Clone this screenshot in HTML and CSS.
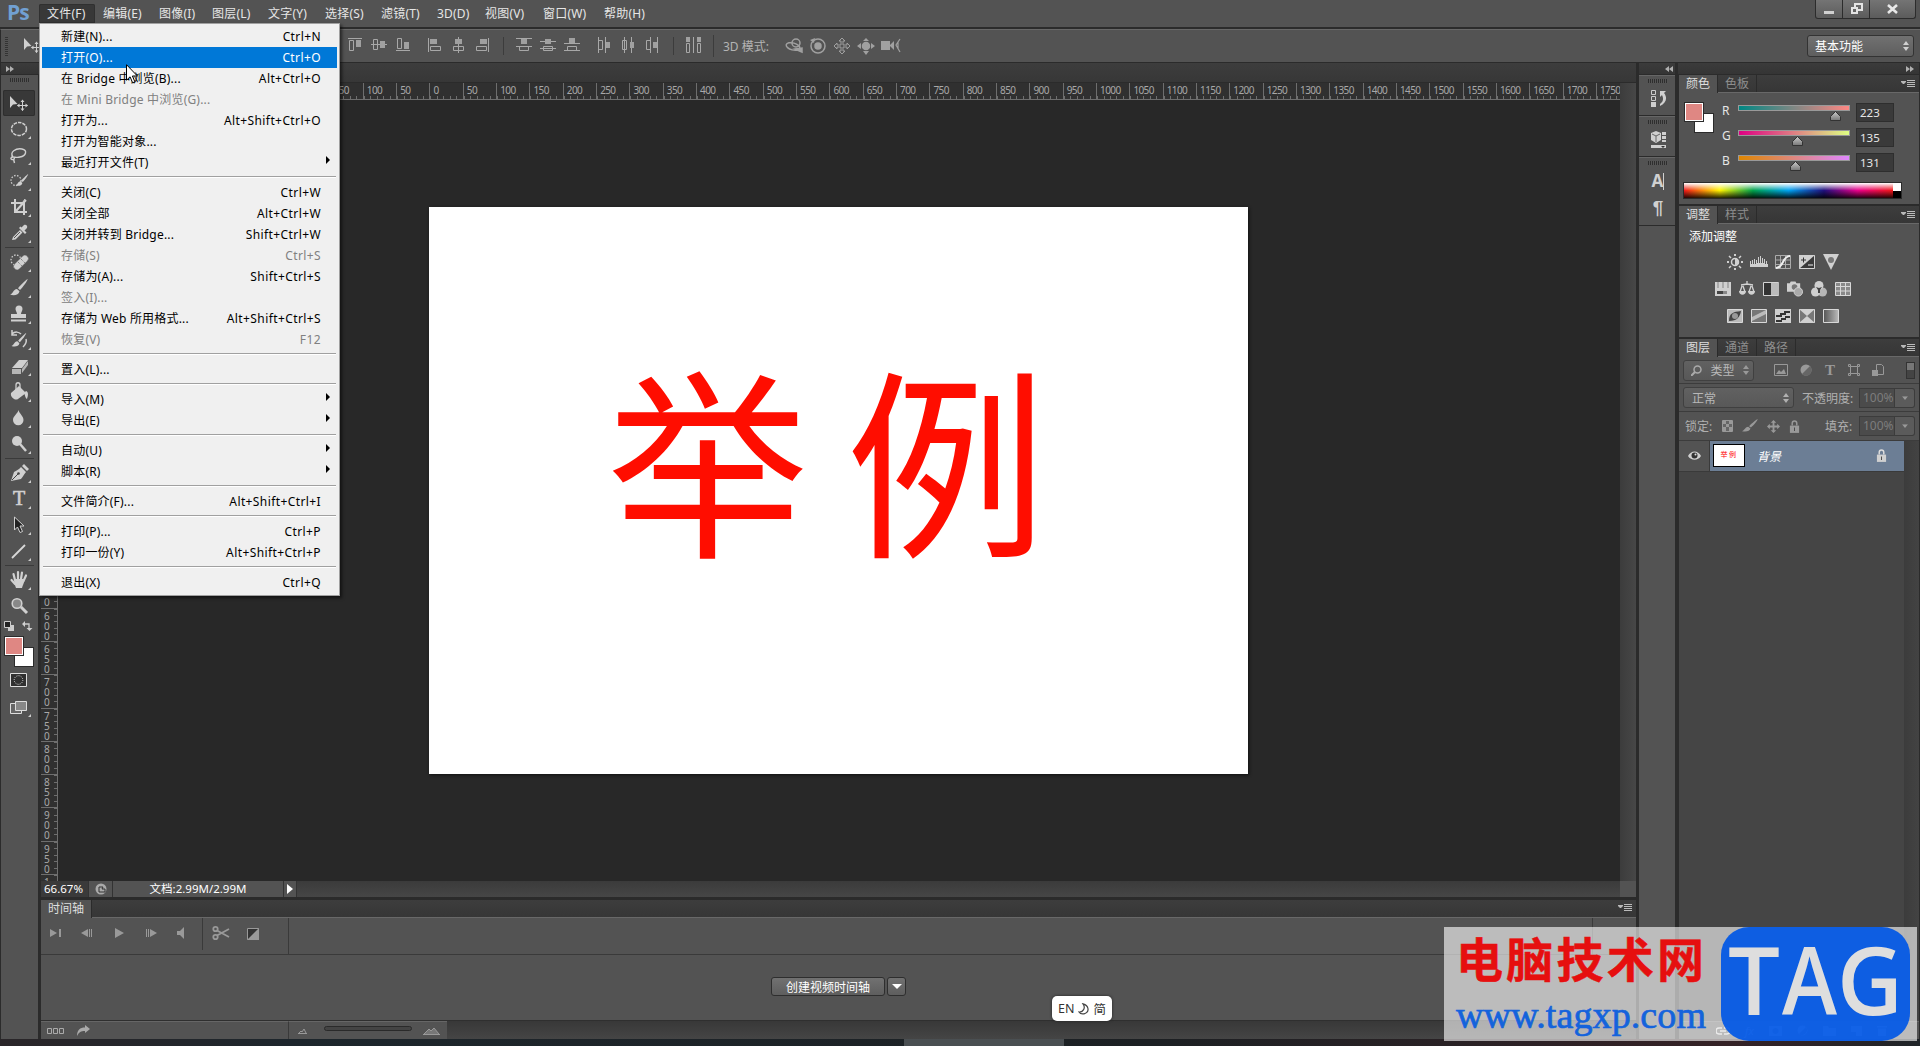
FILE: index.html
```html
<!DOCTYPE html>
<html lang="zh-CN">
<head>
    <meta charset="UTF-8">
    <title>Ps</title>
    <link rel="stylesheet" href="styles.css">
    <script src="rulers.js" defer></script>
</head>
<body>
    <!-- shared icons -->
    <svg class="defs" width="0" height="0">
        <symbol id="panel-menu" viewBox="0 0 14 9"><path d="M0 2h5v1L3 5H2L0 3z" fill="#b8b8b8"/><path d="M6 1.500h8M6 3.500h8M6 5.500h8M6 7.500h8" stroke="#bbb" stroke-width="1"/></symbol>
        <symbol id="updown" viewBox="0 0 6 10"><path d="M3 0l3 4H0zM3 10l3-4H0z"/></symbol>
        <symbol id="down" viewBox="0 0 8 5"><path d="M0 0h8L4 5z"/></symbol>
        <symbol id="move" viewBox="0 0 18 16"><path d="M0 1v12l3-3.500L7.500 9z"/><path d="M12.500 5.500v10M7.500 10.500h10" stroke="#d0d0d0"/><path d="M12.500 4.500l2 2.500h-4zM12.500 16l2-2.500h-4zM7 10.500l2.500-2v4zM18 10.500l-2.500-2v4z"/></symbol>
        <symbol id="cross" viewBox="0 0 14 14"><path d="M7 0l3 3H8v3h3V4l3 3-3 3V8H8v3h2l-3 3-3-3h2V8H3v2L0 7l3-3v2h3V3H4z"/></symbol>
        <symbol id="brush" viewBox="0 0 18 18"><path d="M17.500 0c.7.600-4 7.600-7.500 11L8 9.200C11 5.600 17 0 17.500 0zM7 10l2.500 2.300C9 16 4 17 0 15.600 3 15 3 10.500 7 10z"/></symbol>
        <symbol id="lock" viewBox="0 0 12 14"><path d="M1 6h10v8H1z"/><path d="M3.500 6V3.500a2.500 2.500 0 0 1 5 0V6" fill="none" stroke="currentColor" stroke-width="1.600"/><path d="M5.500 8h1v4h-1z" fill="#444"/></symbol>
        <linearGradient id="tg" x2="0" y2="1"><stop offset="0" stop-color="#ccc"/><stop offset="1" stop-color="#777"/></linearGradient>
        <symbol id="thumb" viewBox="0 0 11 10"><path d="M5.500.5l5 5V9.500H.5v-4z" fill="url(#tg)" stroke="#333"/></symbol>
    </svg>

    <div class="app">
        <div class="menubar">
            <div class="logo">Ps</div>
            <div class="menus">
                <span class="menu-title active">文件(F)</span>
                <span class="menu-title">编辑(E)</span>
                <span class="menu-title">图像(I)</span>
                <span class="menu-title">图层(L)</span>
                <span class="menu-title">文字(Y)</span>
                <span class="menu-title">选择(S)</span>
                <span class="menu-title">滤镜(T)</span>
                <span class="menu-title">3D(D)</span>
                <span class="menu-title">视图(V)</span>
                <span class="menu-title">窗口(W)</span>
                <span class="menu-title">帮助(H)</span>
            </div>
            <div class="window-buttons">
                <button><svg width="10" height="12"><path d="M0 8h10v3H0z"/></svg></button>
                <button><svg width="13" height="12"><path d="M5 5V1h7v6H8" fill="none" stroke="#e4e4e4" stroke-width="2"/><path d="M2 5h5v5H2z" fill="none" stroke="#e4e4e4" stroke-width="2"/></svg></button>
                <button class="close"><svg width="11" height="10"><path d="M1 1l9 8M10 1l-9 8" stroke="#e8e8e8" stroke-width="2.600"/></svg></button>
            </div>
        </div>

        <div class="options-bar">
            <div class="grip-v"></div>
            <svg class="current-tool" width="18" height="16"><use href="#move"/></svg>
            <svg class="align-icons" width="360" height="18" viewBox="345 0 360 18">
                <g fill="none" stroke="#a8a8a8">
                    <path d="M348 1.500h14M349.500 3.500h4v10h-4zM371 7.500h16M373.500 2.500h4v10h-4zM396 13.500h14M397.500 1.500h4v10h-4z"/>
                    <path d="M428.500 1v14M430.500 9.500h10v4h-10zM458.500 0v16M453.500 9.500h10v4h-10zM488.500 1v14M476.500 9.500h10v4h-10z"/>
                    <path d="M516 1.500h16M516 9.500h16M519.500 9.500h9v4h-9zM540 4.500h16M540 11.500h16M543.500 9.500h9v4h-9zM564 6.500h16M564 13.500h16M567.500 9.500h9v4h-9z"/>
                    <path d="M598.500 0v16M605.500 0v16M598.500 3.500h4v9h-4zM624.500 0v16M631.500 0v16M622.500 3.500h4v9h-4zM650.500 0v16M657.500 0v16M646.500 3.500h4v9h-4z"/>
                    <path d="M686.500 6.500h3v9h-3zM697.500 6.500h3v9h-3zM693.500 0v16"/>
                </g>
                <g fill="#a0a0a0">
                    <path d="M356 3h5v7h-5zM380 4h5v7h-5zM404 5h5v7h-5zM430 2h7v5h-7zM455 2h7v5h-7zM480 2h7v5h-7zM521 2h6v5h-6zM545 2h6v5h-6zM569 1h6v5h-6zM606 5h4v6h-4zM630 5h4v6h-4zM653 5h4v6h-4zM686 0h4v5h-4zM697 0h4v5h-4z"/>
                </g>
                <path d="M503.500-2v20M673.500-2v20" stroke="#3c3c3c"/>
            </svg>
            <div class="divider"></div>
            <span class="mode-label">3D 模式:</span>
            <svg class="mode-icons" width="116" height="18" fill="none" stroke="#a0a0a0" stroke-width="1.500">
                <circle cx="11" cy="6" r="4"/><ellipse cx="8" cy="9.500" rx="7" ry="3.500" transform="rotate(15 8 9.500)"/><path d="M10 12l7-1v4z" fill="#a0a0a0"/>
                <circle cx="33" cy="9" r="7"/><circle cx="33" cy="9" r="3" fill="#a0a0a0"/><path d="M25 3l5-2-1 5z" fill="#a0a0a0" stroke="none"/>
                <path d="M57 1l3 3h-2v4h4V6l3 3-3 3v-2h-4v4h2l-3 3-3-3h2v-4h-4v2l-3-3 3-3v2h4V4h-2z" stroke-width="1"/>
                <circle cx="81" cy="9" r="3.500" fill="#a0a0a0"/><path d="M81 1l3 3h-6zM81 18l3-4h-6zM72 9l4-3v6zM90 9l-4-3v6z" fill="#a0a0a0" stroke="none"/>
                <path d="M96 4h9v9h-9zM105 8l4-4v9l-4-4z" fill="#a0a0a0" stroke="none"/><path d="M115 2l-4 6 4 7M113 5v7" stroke-width="1.200"/>
            </svg>
            <div class="workspace-select"><span>基本功能</span><svg width="6" height="10"><use href="#updown"/></svg></div>
        </div>

        <div class="workspace">
            <div class="tools">
                <div class="strip-head left"><svg width="8" height="6"><path d="M0 0l4 3-4 3zM4 0l4 3-4 3z"/></svg></div>
                <div class="grip"></div>
                <div class="tool active nofly"><svg viewBox="0 0 32 26"><use href="#move" x="7" y="5" width="18" height="16"/></svg></div>
                <div class="tool"><svg viewBox="0 0 32 26"><ellipse cx="16" cy="13" rx="7.500" ry="6.500" fill="none" stroke="#d0d0d0" stroke-width="1.500" stroke-dasharray="3.500 1"/></svg></div>
                <div class="tool"><svg viewBox="0 0 32 26"><path d="M10 15c-4-5 3-9 9-8 6 1 4 7-2 8-3 1-5 0-7 0zm0 0c-2 0-3 2-1 2.500s3-1 2-2.500M10.500 17l1 4" fill="none" stroke="#d0d0d0" stroke-width="1.400"/></svg></div>
                <div class="tool"><svg viewBox="0 0 32 26"><circle cx="13" cy="12.500" r="5" fill="none" stroke="#d0d0d0" stroke-width="1.300" stroke-dasharray="1.500 1.500"/><use href="#brush" x="12" y="6" width="14" height="13"/></svg></div>
                <div class="tool"><svg viewBox="0 0 32 26"><path d="M12 5v13h12M8 9h13v12M13 17l10-11" fill="none" stroke="#d0d0d0" stroke-width="2"/><path d="M22 5l-9 13" stroke="#d0d0d0"/></svg></div>
                <div class="tool"><svg viewBox="0 0 32 26"><path d="M9 20l1-3 7-7 2.500 2.500-7 7zM16 8l6 6 1.500-1.500-2-2L24 8c1-2-1-4-3-3l-2.500 2.500-1-1z"/><path d="M11 18l6-6" stroke="#555"/></svg></div>
                <div class="tool-sep"></div>
                <div class="tool"><svg viewBox="0 0 32 26"><circle cx="13" cy="11" r="5" fill="none" stroke="#d0d0d0" stroke-width="1.300" stroke-dasharray="1.500 1.500"/><rect x="9" y="10" width="18" height="7" rx="3.500" transform="rotate(-45 18 13.500)" stroke="#555" stroke-width=".5"/><path d="M15 13l4 4M18 10l4 4" stroke="#666" stroke-dasharray="1 1.200"/></svg></div>
                <div class="tool"><svg viewBox="0 0 32 26"><use href="#brush" x="7" y="4" width="18" height="18"/></svg></div>
                <div class="tool"><svg viewBox="0 0 32 26"><path d="M14 13c0-2-1.500-3-1.500-5a3.500 3.500 0 0 1 7 0c0 2-1.500 3-1.500 5h5v4H8v-4zM8 18.500h15v2H8z"/></svg></div>
                <div class="tool"><svg viewBox="0 0 32 26"><use href="#brush" x="8" y="6" width="16" height="15"/><path d="M9 7c3-3 7-2 9 0M9 3v5h5M23 12c1 3-1 6-3 8" fill="none" stroke="#d0d0d0" stroke-width="1.500"/></svg></div>
                <div class="tool"><svg viewBox="0 0 32 26"><path d="M9 15l7-8h9l-6 8z"/><path d="M9 16h9v5H9zM19 16l6-8v4l-6 8z" opacity=".8"/></svg></div>
                <div class="tool"><svg viewBox="0 0 32 26"><path d="M8 14l8-7 7 7-8 6c-3 2-8-2-7-6zM23 12c3 1 2 5 1 8-2-1-2-5-3-6z"/><path d="M13 11V6c0-3 4-3 4 0v4" fill="none" stroke="#d0d0d0" stroke-width="1.300"/></svg></div>
                <div class="tool"><svg viewBox="0 0 32 26"><path d="M15.500 5c1 4 5 6 5 10a5 5 0 0 1-10.500 0c0-4 4.500-6 5.500-10z"/></svg></div>
                <div class="tool"><svg viewBox="0 0 32 26"><circle cx="14" cy="10" r="5"/><path d="M17 13l6 7" stroke="#d0d0d0" stroke-width="2.500"/></svg></div>
                <div class="tool-sep"></div>
                <div class="tool"><svg viewBox="0 0 32 26"><path d="M8 21l3-9c3-2 6-3 7-5l5 5c-2 2-3 5-5 7zM19 6l2-2 5 5-2 2z"/><path d="M9 20l6-6" stroke="#444"/><circle cx="15.500" cy="13.500" r="1.300" fill="#444"/></svg></div>
                <div class="tool type">T</div>
                <div class="tool"><svg viewBox="0 0 32 26"><path d="M11.500 5v13l3-3 2.500 5.500 2.500-1L17 14h4z" fill="#222" stroke="#d0d0d0"/></svg></div>
                <div class="tool"><svg viewBox="0 0 32 26"><path d="M9 20L22 7" stroke="#d8d8d8" stroke-width="1.800"/></svg></div>
                <div class="tool-sep"></div>
                <div class="tool"><svg viewBox="0 0 32 26"><g stroke="#d0d0d0" stroke-width="2.200" stroke-linecap="round"><path d="M12 13L10.500 7M15 12V5M18 12l1-6.500M20.500 14L23 8.500M12 17L8.500 13"/></g><path d="M11 12h10.500c0 4-2 6-2.500 9h-6c-1-3-2-5-2-9z"/></svg></div>
                <div class="tool nofly"><svg viewBox="0 0 32 26"><circle cx="14" cy="10.500" r="4.800" fill="#888" stroke="#d0d0d0" stroke-width="1.600"/><path d="M18 14l6 6" stroke="#d0d0d0" stroke-width="3"/></svg></div>
                <div class="swatch-tools">
                    <svg width="10" height="10"><path d="M4 4h6v6H4z" fill="#ccc"/><path d="M.5.5h6v6h-6z" fill="#222" stroke="#ccc"/></svg>
                    <svg width="11" height="10"><path d="M2 3h5v5" fill="none" stroke="#ccc" stroke-width="1.300"/><path d="M0 3l3-3v6zM7.500 10l-3-3h6z"/></svg>
                </div>
                <div class="swatches"><i class="fg"></i><i class="bg"></i></div>
                <svg class="quick-mask" width="17" height="14"><path d="M.5.5h16v13H.5z" fill="#303030" stroke="#ddd"/><circle cx="8.500" cy="7" r="4.300" fill="none" stroke="#ddd" stroke-dasharray="1 1.200"/></svg>
                <div class="tool screen-mode"><svg viewBox="0 0 32 26"><path d="M7.500 9.500h11v10h-11z" fill="#666" stroke="#ddd"/><path d="M12.500 7.500h11v9h-11z" fill="#888" stroke="#ddd"/></svg></div>
            </div>

            <div class="document">
                <div class="doc-tabs"></div>
                <div class="view">
                    <div class="ruler-h" id="rulerH"></div>
                    <div class="stage">
                        <div class="ruler-v" id="rulerV"></div>
                        <div class="canvas">
                            <div class="page">
                                <svg width="819" height="567">
                                    <text x="178" y="335" class="sample">举</text>
                                    <text x="417" y="335" class="sample">例</text>
                                </svg>
                            </div>
                        </div>
                    </div>
                    <div class="vscroll"></div>
                </div>
                <div class="status">
                    <span class="zoom">66.67%</span>
                    <span class="share"><svg width="12" height="12"><circle cx="6" cy="6" r="5.500" fill="#aaa"/><path d="M4 9V4h4l-1 2h3v3z" fill="#aaa" stroke="#333"/></svg></span>
                    <span class="docsize">文档:2.99M/2.99M</span>
                    <span class="more"><svg width="6" height="10"><path d="M0 0l6 5-6 5z"/></svg></span>
                    <span class="hscroll"></span>
                    <span class="corner"></span>
                </div>
                <div class="timeline">
                    <div class="tabs"><span class="tab active">时间轴</span><svg class="pm" width="14" height="9"><use href="#panel-menu"/></svg></div>
                    <div class="tl-controls">
                        <svg class="transport" width="202" height="34" viewBox="0 2 202 34" fill="#999">
                            <path d="M9 13l7 4-7 4zM18 13h2v8h-2zM47 13v8l-7-4zM48 13h1v8h-1zM50 13h1v8h-1zM74 12l9 5-9 5zM105 13h1v8h-1zM107 13h1v8h-1zM109 13v8l7-4zM136 15h3l4-4v12l-4-4h-3z"/>
                            <g fill="none" stroke="#999" stroke-width="1.800"><circle cx="174.500" cy="13" r="2.200"/><circle cx="174.500" cy="21" r="2.200"/><path d="M176 14.500l12 6.500M176 19.500l12-6.500"/></g>
                            <path d="M161.500 2v32" stroke="#3a3a3a"/>
                        </svg>
                        <svg class="transition" width="12" height="12"><path d="M.5.5h11v11H.5z" fill="#333" stroke="#999"/><path d="M12 0v12H0z" fill="#999"/></svg>
                        <div class="tl-split"></div>
                        <div class="tl-end"></div>
                    </div>
                    <div class="tl-body">
                        <button class="create">创建视频时间轴</button>
                        <button class="create-more"><svg width="10" height="5" viewBox="0 0 8 5" preserveAspectRatio="none"><use href="#down"/></svg></button>
                    </div>
                    <div class="tl-foot">
                        <div class="foot-left">
                            <svg width="18" height="8" fill="none" stroke="#aaa"><path d="M.5 1.500h4v5h-4zM6.500 1.500h4v5h-4zM12.500 1.500h4v5h-4z"/></svg>
                            <svg width="13" height="11"><path d="M8 0l5 4-5 4V6C4 6 2 7 0 11 0 5 3 2.500 8 2.500z" fill="#aaa"/></svg>
                        </div>
                        <div class="foot-zoom">
                            <svg width="9" height="6"><path d="M0 5.500h9M1 5l2-2 1 1 2-3 2 4" fill="none" stroke="#999"/></svg>
                            <i class="track"></i>
                            <svg width="17" height="8"><path d="M0 7.500h17M1 7l5-5 2 2 3-3 5 6" fill="#777" stroke="#999"/></svg>
                        </div>
                    </div>
                </div>
            </div>

            <div class="dock">
                <div class="strip-head right"><svg width="8" height="6"><path d="M4 0L0 3l4 3zM8 0L4 3l4 3z"/></svg></div>
                <div class="dock-group">
                    <i class="grip"></i>
                    <svg width="16" height="18"><path d="M.5.5h4v4h-4zM.5 6.500h4v4h-4z" fill="none" stroke="#ccc"/><path d="M0 12h5v5H0z"/><path d="M9 1h6l-2 2c4 5 2 10-4 13v-2c3-2 4-5 2-9l-2 2z"/></svg>
                </div>
                <div class="dock-group">
                    <i class="grip"></i>
                    <svg width="16" height="18"><path d="M5 0l5 2v7l-5 3-5-3V2z"/><path d="M1 3l4 2 4-2M5 5v6" stroke="#666" fill="none"/><path d="M11 1h4v3h-4zM11 5h4v3h-4zM11 9h4v2h-4zM0 14h15v3H0z"/><path d="M10 15h4l-2 2z" fill="#333"/></svg>
                </div>
                <div class="dock-group tall">
                    <i class="grip"></i>
                    <span class="dock-char">A<i></i></span>
                    <span class="dock-para">¶</span>
                </div>
            </div>

            <div class="panels">
                <div class="strip-head end"><svg width="8" height="6"><path d="M0 0l4 3-4 3zM4 0l4 3-4 3z"/></svg></div>

                <div class="panel color-panel">
                    <div class="tabs"><span class="tab active">颜色</span><span class="tab">色板</span><svg class="pm" width="14" height="9"><use href="#panel-menu"/></svg></div>
                    <div class="color-body">
                        <div class="swatches"><i class="fg"></i><i class="bg"></i></div>
                        <div class="sliders">
                            <div class="slider"><b>R</b><div class="bar r"><svg style="margin-left:91px" width="11" height="10"><use href="#thumb"/></svg></div><span class="num">223</span></div>
                            <div class="slider"><b>G</b><div class="bar g"><svg style="margin-left:53px" width="11" height="10"><use href="#thumb"/></svg></div><span class="num">135</span></div>
                            <div class="slider"><b>B</b><div class="bar b"><svg style="margin-left:51px" width="11" height="10"><use href="#thumb"/></svg></div><span class="num">131</span></div>
                        </div>
                    </div>
                    <div class="spectrum"><div class="hues"></div><div class="bw"></div></div>
                </div>

                <div class="panel adjust-panel">
                    <div class="tabs"><span class="tab active">调整</span><span class="tab">样式</span><svg class="pm" width="14" height="9"><use href="#panel-menu"/></svg></div>
                    <div class="adjust-title">添加调整</div>
                    <div class="adjust-row">
                        <svg viewBox="0 0 16 16"><circle cx="8" cy="8" r="3.500" fill="none" stroke="#d4d4d4" stroke-width="1.500"/><path d="M8 4.500v7a3.500 3.500 0 0 0 0-7M7 0h2v2H7zM7 14h2v2H7zM0 7h2v2H0zM14 7h2v2h-2z"/><path d="M2 2l2 2M12 12l2 2M14 2l-2 2M4 12l-2 2" stroke="#d4d4d4" stroke-width="1.500"/></svg>
                        <svg viewBox="0 0 18 16" class="w18"><path d="M0 13V7h1v3h1V6h1v4h1V5h1v5h1V6h1v3h1V3h1v6h1V2h1v7h1V4h1v5h1V5h1v5h1V7h1v3h1v3z"/></svg>
                        <svg viewBox="0 0 16 14"><path d="M.5.5h15v13H.5zM5.500 0v14M10.500 0v14M0 5h16M0 9.500h16" fill="none" stroke="#aaa"/><path d="M1 13c8 0 6-12 14-12" fill="none" stroke="#eee" stroke-width="2"/></svg>
                        <svg viewBox="0 0 16 14"><path d="M.5.5h15v13H.5z" fill="#3a3a3a" stroke="#d4d4d4"/><path d="M0 0h16L0 14z"/><path d="M2 5h5M4.500 2.500v5" stroke="#333"/><path d="M9 10h5" stroke="#eee"/></svg>
                        <svg viewBox="0 0 16 16"><path d="M0 0h16L8 16z"/><circle cx="8" cy="6" r="3" fill="#777"/></svg>
                    </div>
                    <div class="adjust-row">
                        <svg viewBox="0 0 16 14"><path d="M0 0h16v14H0z"/><path d="M2 0h2v6H2zM7 0h2v6H7zM12 0h2v6h-2z" fill="#aaa"/><path d="M2 9h6v3H2z" fill="#444"/><path d="M8 9h4v3H8z" fill="#888"/></svg>
                        <svg viewBox="0 0 16 16"><path d="M8 0v4M2 4l6-1 6 1M3 5l-2 6M4 5l2 6M12 5l-2 6M13 5l2 6" fill="none" stroke="#d4d4d4" stroke-width="1.300"/><path d="M0 10h7c0 5-7 5-7 0zM9 10h7c0 5-7 5-7 0z"/></svg>
                        <svg viewBox="0 0 16 14"><path d="M.5.5h15v13H.5z" fill="#333" stroke="#d4d4d4"/><path d="M8 1h8v12H8z" fill="#bbb"/></svg>
                        <svg viewBox="0 0 17 16"><path d="M0 2h3l1-2h5l1 2h4v9H0z"/><circle cx="8" cy="6" r="3" fill="#777"/><circle cx="12" cy="11" r="4.500" fill="#aaa" stroke="#d4d4d4"/></svg>
                        <svg viewBox="0 0 16 16"><circle cx="8" cy="4.500" r="4.500"/><circle cx="4.500" cy="11" r="4.500"/><circle cx="11.500" cy="11" r="4.500" opacity=".8"/><path d="M5 6l3 1 3-1-2 3v3H7V9z" fill="#444"/></svg>
                        <svg viewBox="0 0 16 14"><path d="M.5.5h15v13H.5zM.5 4.500h15M.5 9h15M5.500 1v12M10.500 1v12" fill="#888" stroke="#d8d8d8"/></svg>
                    </div>
                    <div class="adjust-row">
                        <svg viewBox="0 0 16 14"><path d="M.5.5h15v13H.5z" fill="#bbb" stroke="#d8d8d8"/><path d="M2 12C2 4 6 3 14 2 13 8 10 12 2 12z" fill="#444"/><circle cx="8" cy="7" r="3" fill="#999"/></svg>
                        <svg viewBox="0 0 16 14"><path d="M.5.5h15v13H.5z" fill="#777" stroke="#d8d8d8"/><path d="M1 8L15 1v4L1 12z" fill="#bbb"/></svg>
                        <svg viewBox="0 0 16 14"><path d="M0 0h16v14H0z"/><path d="M1 6h4V4h4V2h6v2h-4v2H7v2H1zM1 11h5V9h4V7h5v2h-4v2H7v2H1z" fill="#333"/></svg>
                        <svg viewBox="0 0 16 14"><path d="M.5.5h15v13H.5z" fill="#777" stroke="#d8d8d8"/><path d="M0 0h16L8 7zM0 14h16L8 7z"/></svg>
                        <svg viewBox="0 0 16 14"><defs><linearGradient id="gm"><stop stop-color="#555"/><stop offset="1" stop-color="#bbb"/></linearGradient></defs><path d="M.5.5h15v13H.5z" fill="url(#gm)" stroke="#d8d8d8"/></svg>
                    </div>
                </div>

                <div class="panel layers-panel">
                    <div class="tabs"><span class="tab active">图层</span><span class="tab">通道</span><span class="tab">路径</span><svg class="pm" width="14" height="9"><use href="#panel-menu"/></svg></div>
                    <div class="layer-filter">
                        <div class="select kind"><svg width="11" height="11"><circle cx="6.500" cy="4.500" r="3.500" fill="none" stroke="#aaa" stroke-width="1.500"/><path d="M4 7l-4 4" stroke="#aaa" stroke-width="2"/></svg><span>类型</span><svg width="6" height="10"><use href="#updown"/></svg></div>
                        <svg width="14" height="12"><path d="M.5.5h13v11H.5z" fill="none" stroke="#999"/><path d="M2 10l3-4 2 2 3-3 2 5z"/></svg>
                        <svg width="12" height="12"><circle cx="6" cy="6" r="5.500" fill="#999"/><path d="M2 10L10 2A5.500 5.500 0 0 1 2 10z" fill="#666"/></svg>
                        <span class="filter-type">T</span>
                        <svg width="12" height="12"><path d="M2.500 2.500h7v7h-7z" fill="none" stroke="#999"/><path d="M.5.5h2v2h-2zM9.500.5h2v2h-2zM.5 9.500h2v2h-2zM9.500 9.500h2v2h-2z" fill="#555" stroke="#999"/></svg>
                        <svg width="12" height="13"><path d="M4.500.5h5l2 2v8h-7z" fill="none" stroke="#999"/><path d="M0 6h6v6H0z"/></svg>
                        <i class="toggle"></i>
                    </div>
                    <div class="layer-mode">
                        <div class="select mode"><span>正常</span><svg width="6" height="10"><use href="#updown"/></svg></div>
                        <label>不透明度:</label>
                        <span class="pct">100%</span><span class="pct-btn"><svg width="6" height="4" viewBox="0 0 8 5"><use href="#down"/></svg></span>
                    </div>
                    <div class="layer-lock">
                        <label class="lock-label">锁定:</label>
                        <svg width="11" height="12"><path d="M.5.5h10v11H.5z" fill="#666" stroke="#999"/><path d="M1 1h3v3H1zM7 1h3v3H7zM4 4h3v3H4zM1 7h3v4H1zM7 7h3v4H7z"/></svg>
                        <svg width="16" height="14" viewBox="0 0 18 18" preserveAspectRatio="none"><use href="#brush"/></svg>
                        <svg width="13" height="13"><use href="#cross"/></svg>
                        <svg width="11" height="13" color="#999"><use href="#lock"/></svg>
                        <label class="fill-label">填充:</label>
                        <span class="pct">100%</span><span class="pct-btn"><svg width="6" height="4" viewBox="0 0 8 5"><use href="#down"/></svg></span>
                    </div>
                    <div class="layer-list">
                        <div class="layer">
                            <span class="eye"><svg width="13" height="10"><path d="M0 5c3-6 10-6 13 0-3 5-10 5-13 0z"/><circle cx="6.500" cy="4.500" r="3" fill="#333"/><circle cx="7.500" cy="3.500" r="1" fill="#ddd"/></svg></span>
                            <div class="layer-row">
                                <span class="thumb">举例</span>
                                <span class="layer-name">背景</span>
                                <svg width="11" height="13" color="#ddd"><use href="#lock"/></svg>
                            </div>
                        </div>
                    </div>
                    <div class="layers-foot">
                        <svg width="14" height="8"><path d="M6 1H3a3 3 0 0 0 0 6h3M8 1h3a3 3 0 0 1 0 6H8M4 4h6" fill="none" stroke="#ccc" stroke-width="1.500"/></svg>
                        <em>fx</em>
                        <svg width="13" height="10"><path d="M0 0h13v10H0z"/><circle cx="6.500" cy="5" r="3" fill="#555"/></svg>
                        <svg width="11" height="11"><circle cx="5.500" cy="5.500" r="5"/><path d="M2 9l7-7a5 5 0 0 1-7 7z" fill="#555"/></svg>
                        <svg width="13" height="10"><path d="M0 0h5l1 2h7v8H0z"/></svg>
                        <svg width="11" height="10"><path d="M0 0h11v10H5V6H0z"/></svg>
                        <svg width="10" height="11"><path d="M0 1h10v1.500H0zM1 3.500h8V11H1z"/></svg>
                    </div>
                </div>
            </div>
        </div>
        <div class="taskbar"><i></i></div>
    </div>

    <!-- open file menu -->
    <div class="file-menu">
        <div class="item"><span>新建(N)...</span><kbd>Ctrl+N</kbd></div>
        <div class="item hover"><span>打开(O)...</span><kbd>Ctrl+O</kbd></div>
        <div class="item"><span>在 Bridge 中浏览(B)...</span><kbd>Alt+Ctrl+O</kbd></div>
        <div class="item disabled"><span>在 Mini Bridge 中浏览(G)...</span></div>
        <div class="item"><span>打开为...</span><kbd>Alt+Shift+Ctrl+O</kbd></div>
        <div class="item"><span>打开为智能对象...</span></div>
        <div class="item sub"><span>最近打开文件(T)</span></div>
        <hr>
        <div class="item"><span>关闭(C)</span><kbd>Ctrl+W</kbd></div>
        <div class="item"><span>关闭全部</span><kbd>Alt+Ctrl+W</kbd></div>
        <div class="item"><span>关闭并转到 Bridge...</span><kbd>Shift+Ctrl+W</kbd></div>
        <div class="item disabled"><span>存储(S)</span><kbd>Ctrl+S</kbd></div>
        <div class="item"><span>存储为(A)...</span><kbd>Shift+Ctrl+S</kbd></div>
        <div class="item disabled"><span>签入(I)...</span></div>
        <div class="item"><span>存储为 Web 所用格式...</span><kbd>Alt+Shift+Ctrl+S</kbd></div>
        <div class="item disabled"><span>恢复(V)</span><kbd>F12</kbd></div>
        <hr>
        <div class="item"><span>置入(L)...</span></div>
        <hr>
        <div class="item sub"><span>导入(M)</span></div>
        <div class="item sub"><span>导出(E)</span></div>
        <hr>
        <div class="item sub"><span>自动(U)</span></div>
        <div class="item sub"><span>脚本(R)</span></div>
        <hr>
        <div class="item"><span>文件简介(F)...</span><kbd>Alt+Shift+Ctrl+I</kbd></div>
        <hr>
        <div class="item"><span>打印(P)...</span><kbd>Ctrl+P</kbd></div>
        <div class="item"><span>打印一份(Y)</span><kbd>Alt+Shift+Ctrl+P</kbd></div>
        <hr>
        <div class="item"><span>退出(X)</span><kbd>Ctrl+Q</kbd></div>
    </div>
    <svg class="cursor" width="13" height="20"><path d="M.5.7v15.500l3.600-3.400 2.500 6 2.300-1-2.500-5.800h5z" fill="#fff" stroke="#000"/></svg>

    <div class="ime">EN<svg width="11" height="12"><path d="M5 .8c6 1.500 7 8.500 1 10-2 .4-4-.2-5-1.800 4 .5 7-4 4-8.200z" fill="none" stroke="#444" stroke-width="1.200"/></svg>简</div>

    <div class="watermark">
        <svg width="473" height="114">
            <rect x="277" y="0" width="189" height="114" rx="28" fill="#0057e6" opacity=".92"/>
            <text x="12" y="50" textLength="248" class="wm-title">电脑技术网</text>
            <text x="12" y="101" textLength="250" class="wm-url">www.tagxp.com</text>
            <text x="284" y="88" textLength="52" lengthAdjust="spacingAndGlyphs" class="wm-tag">T</text>
            <text x="338" y="88" textLength="55" lengthAdjust="spacingAndGlyphs" class="wm-tag">A</text>
            <text x="393" y="88" textLength="66" lengthAdjust="spacingAndGlyphs" class="wm-tag">G</text>
        </svg>
    </div>
</body>
</html>
```
FILE: styles.css
```css
* {
    box-sizing: border-box;
}
body {
    margin: 0;
    width: 1920px;
    height: 1046px;
    overflow: hidden;
    position: relative;
    font-family: "Noto Sans", "Noto Sans CJK SC", sans-serif;
    font-size: 12px;
    background: #282828;
    color: #e6e6e6;
    fill: #d0d0d0;
}
svg {
    display: block;
    flex: none;
}
i {
    display: block;
}
button {
    font: inherit;
    color: inherit;
    padding: 0;
}
.defs {
    position: absolute;
}
.app {
    display: flex;
    flex-direction: column;
    height: 1046px;
}

/* Menu bar */
.menubar {
    display: flex;
    height: 29px;
    background: #535353;
    border-bottom: 2px solid #2b2b2b;
}
.logo {
    width: 39px;
    padding-left: 7px;
    font: bold 21px/25px "Open Sans", sans-serif;
    letter-spacing: -1px;
    color: #71a0d2;
}
.menus {
    display: grid;
    grid-template-columns: 56px 56px 53px 56px 57px 56px 56px 48px 58px 61px 61px;
    padding-top: 4px;
    flex: 1;
    align-content: start;
}
.menu-title {
    height: 19px;
    line-height: 19px;
    padding-left: 8px;
    white-space: nowrap;
    letter-spacing: .2px;
}
.menu-title.active {
    background: #383838;
    border-radius: 2px 2px 0 0;
    box-shadow: 0 0 0 1px #303030 inset;
}
.window-buttons {
    display: flex;
    width: 101px;
    height: 19px;
    margin-right: 4px;
    border: 1px solid #2c2c2c;
    border-top: 0;
    border-radius: 0 0 3px 3px;
    background: linear-gradient(#747474, #5c5c5c);
}
.window-buttons button {
    width: 27px;
    display: flex;
    align-items: center;
    justify-content: center;
    border: 0;
    border-right: 1px solid #2c2c2c;
    background: none;
}
.window-buttons .close {
    flex: 1;
    border-right: 0;
}

/* Options bar */
.options-bar {
    display: flex;
    align-items: center;
    height: 34px;
    background: #535353;
    border-top: 1px solid #686868;
    border-bottom: 1px solid #2b2b2b;
    border-left: 1px solid #2b2b2b;
}
.grip-v {
    width: 3px;
    height: 19px;
    margin-left: 4px;
    background: repeating-linear-gradient(#333 0 1px, #555 1px 2px);
}
.current-tool {
    margin-left: 16px;
    margin-top: -2px;
}
.align-icons {
    margin-left: 303px;
}
.divider {
    width: 1px;
    height: 22px;
    margin-left: 8px;
    background: #3c3c3c;
}
.mode-label {
    width: 62px;
    margin-left: 9px;
    color: #b4b4b4;
}
.workspace-select {
    display: flex;
    align-items: center;
    justify-content: space-between;
    width: 107px;
    height: 22px;
    margin: 0 6px 0 auto;
    padding: 0 4px 0 7px;
    border: 1px solid #333;
    border-radius: 3px;
    background: linear-gradient(#717171, #5e5e5e);
    color: #fff;
}

.workspace {
    display: grid;
    grid-template-columns: 40px 1598px 40px 242px;
    height: 976px;
}
.strip-head {
    height: 12px;
    display: flex;
    align-items: center;
    background: linear-gradient(#3b3b3b, #353535);
    border-bottom: 1px solid #2b2b2b;
    flex: none;
}
.strip-head svg {
    fill: #b0b0b0;
}
.strip-head.left {
    padding-left: 5px;
    margin-right: -1px;
}
.strip-head.right {
    padding-left: 26px;
}
.strip-head.end {
    justify-content: flex-end;
    padding-right: 5px;
}
.grip {
    width: 20px;
    height: 4px;
    flex: none;
    background: repeating-linear-gradient(90deg, #2e2e2e 0 1px, #555 1px 2px);
}

/* Tools */
.tools {
    display: flex;
    flex-direction: column;
    align-items: stretch;
    background: #535353;
    border-left: 1px solid #2b2b2b;
    border-right: 2px solid #2b2b2b;
}
.tools > .grip {
    margin: 3px 0 8px 9px;
}
.tool {
    position: relative;
    height: 26px;
    width: 32px;
    margin-left: 2px;
    flex: none;
}
.tool svg {
    width: 32px;
    height: 26px;
}
.tool::after {
    content: "";
    position: absolute;
    right: 4px;
    bottom: 3px;
    border: solid transparent;
    border-width: 0 0 3px 3px;
    border-bottom-color: #ccc;
}
.tool.nofly::after {
    display: none;
}
.tool.active {
    background: #383838;
    box-shadow: 0 0 0 1px #2e2e2e inset;
    border-radius: 2px;
}
.tool.type {
    font: 20px/25px "Liberation Serif", serif;
    -webkit-text-stroke: .6px #d0d0d0;
    text-align: center;
    color: #d0d0d0;
}
.tool-sep {
    height: 1px;
    margin: 1px 4px 1px 4px;
    background: #3a3a3a;
    flex: none;
}
.swatch-tools {
    display: flex;
    gap: 8px;
    padding: 2px 0 0 3px;
    height: 17px;
}
.swatches {
    position: relative;
    width: 31px;
    height: 32px;
}
.swatches i {
    position: absolute;
    width: 20px;
    height: 20px;
    border: 1px solid #2b2b2b;
}
.swatches .fg {
    left: 0;
    top: 0;
    z-index: 1;
    background: #df8783;
    box-shadow: 0 0 0 1px #fff inset;
}
.swatches .bg {
    left: 10px;
    top: 11px;
    background: #fff;
}
.tools .swatches {
    margin-left: 3px;
}
.quick-mask {
    margin: 5px 0 0 9px;
}
.screen-mode {
    margin-top: 7px;
}

/* Document */
.document {
    display: flex;
    flex-direction: column;
    background: #2b2b2b;
    padding: 0 2px 0 1px;
    min-width: 0;
}
.doc-tabs {
    height: 20px;
    background: linear-gradient(#3d3d3d, #373737);
    border-bottom: 1px solid #2b2b2b;
}
.view {
    display: grid;
    grid-template-columns: 1579px 16px;
    grid-template-rows: 17px 781px;
    height: 798px;
}
.ruler-h {
    display: flex;
    overflow: hidden;
    background: #303030;
    border-bottom: 1px solid #6e6e6e;
}
.ruler-h div {
    flex: none;
    width: 33.333px;
    height: 16px;
    display: grid;
    grid-template-columns: repeat(5, 1fr);
    align-items: end;
    border-left: 1px solid #6e6e6e;
    position: relative;
}
.ruler-h div i {
    height: 3px;
    border-left: 1px solid #6e6e6e;
}
.ruler-h div span {
    position: absolute;
    left: 3px;
    top: 0;
    font-size: 10px;
    line-height: 14px;
    letter-spacing: -.6px;
    color: #a8a8a8;
}
.vscroll {
    grid-column: 2;
    grid-row: 1 / 3;
    background: linear-gradient(90deg, #3c3c3c, #474747);
}
.stage {
    display: flex;
    min-width: 0;
    overflow: hidden;
}
.ruler-v {
    width: 17px;
    flex: none;
    overflow: hidden;
    background: #303030;
    border-right: 1px solid #6e6e6e;
}
.ruler-v div {
    position: relative;
    height: 33.333px;
    display: grid;
    grid-template-rows: repeat(5, 1fr);
    justify-items: end;
    border-top: 1px solid #6e6e6e;
}
.ruler-v div i {
    width: 3px;
    border-top: 1px solid #6e6e6e;
}
.ruler-v div span {
    position: absolute;
    left: 3px;
    top: 2px;
    width: 6px;
    font-size: 10px;
    line-height: 10px;
    word-break: break-all;
    color: #a8a8a8;
}
.canvas {
    flex: 1;
    background: #282828;
    padding: 107px 0 0 371px;
}
.page {
    width: 819px;
    height: 567px;
    background: #fff;
    box-shadow: 1px 1px 3px #111;
}
.sample {
    font-family: "Noto Sans CJK SC", sans-serif;
    font-size: 201px;
    fill: #ff0d00;
}
.status {
    display: flex;
    height: 17px;
    line-height: 16px;
    border-bottom: 1px solid #2b2b2b;
    color: #fff;
}
.status > span {
    display: flex;
    align-items: center;
    justify-content: center;
    background: #535353;
    border-right: 1px solid #333;
}
.status .zoom {
    width: 48px;
    justify-content: flex-start;
    padding-left: 3px;
    background: #3a3a3a;
    font-size: 11.5px;
}
.status .share {
    width: 24px;
}
.status .docsize {
    width: 171px;
    font-size: 11.5px;
}
.status .more {
    width: 13px;
}
.more svg {
    fill: #fff;
}
.status .hscroll {
    flex: 1;
    border: 0;
    background: linear-gradient(#3b3b3b, #464646);
}
.status .corner {
    width: 16px;
    border: 0;
}

/* Tabs shared by every panel */
.tabs {
    display: flex;
    height: 18px;
    flex: none;
    background: linear-gradient(#3d3d3d, #363636);
    border-bottom: 1px solid #686868;
}
.tab {
    height: 17px;
    line-height: 17px;
    padding: 0 7px;
    color: #8e8e8e;
    border-right: 1px solid #2b2b2b;
}
.tab.active {
    height: 18px;
    background: #535353;
    color: #dedede;
}
.pm {
    margin: 4px 4px 0 auto;
}

/* Timeline */
.timeline {
    flex: 1;
    display: flex;
    flex-direction: column;
    margin-top: 2px;
    background: #535353;
}
.timeline .pm {
    margin-top: 3px;
}
.tl-controls {
    display: flex;
    height: 37px;
    border-bottom: 1px solid #3a3a3a;
}
.transition {
    margin: 10px 0 0 4px;
}
.tl-split {
    width: 1px;
    background: #3a3a3a;
    margin-left: 29px;
}
.tl-end {
    width: 1px;
    background: #3a3a3a;
    margin: 0 43px 0 auto;
}
.tl-body {
    flex: 1;
    display: flex;
    gap: 2px;
    padding: 22px 0 0 730px;
}
.tl-body button {
    display: flex;
    align-items: center;
    justify-content: center;
    height: 19px;
    border: 1px solid #2e2e2e;
    border-radius: 3px;
    background: linear-gradient(#717171, #5e5e5e);
    color: #fff;
}
.create {
    width: 114px;
}
.create-more {
    width: 19px;
}
.create-more svg {
    fill: #fff;
}
.tl-foot {
    display: flex;
    height: 19px;
    border-top: 1px solid #2f2f2f;
    background: linear-gradient(#383838, #454545);
}
.foot-left,
.foot-zoom {
    display: flex;
    align-items: center;
    background: #535353;
    border-top: 1px solid #666;
}
.foot-left {
    width: 248px;
    gap: 12px;
    padding-left: 6px;
    border-right: 1px solid #3a3a3a;
}
.foot-zoom {
    width: 158px;
    padding-left: 9px;
}
.track {
    width: 88px;
    height: 5px;
    margin: -4px 11px 0 17px;
    border: 1px solid #2a2a2a;
    border-radius: 3px;
    background: #444;
}

/* Collapsed dock */
.dock {
    display: flex;
    flex-direction: column;
    background: #535353;
    border-left: 1px solid #2b2b2b;
    border-right: 3px solid #2b2b2b;
}
.dock-group {
    display: flex;
    flex-direction: column;
    align-items: center;
    height: 41px;
    padding: 3px 0 0 2px;
    border-bottom: 1px solid #2b2b2b;
    border-top: 1px solid #666;
}
.dock-group svg {
    margin: 7px 0 0 1px;
}
.dock-group.tall {
    height: 69px;
}
.dock-char {
    display: flex;
    align-items: center;
    font: bold 17px/20px "Noto Sans", sans-serif;
    color: #d0d0d0;
    margin-top: 6px;
}
.dock-char i {
    width: 1px;
    height: 17px;
    background: #d0d0d0;
}
.dock-para {
    font: bold 19px/22px "Liberation Sans", sans-serif;
    margin-top: 6px;
    color: #d0d0d0;
}

/* Right panels */
.panels {
    display: flex;
    flex-direction: column;
    background: #535353;
    border-right: 1px solid #2b2b2b;
}
.panel {
    border-left: 1px solid #2b2b2b;
    border-bottom: 2px solid #2b2b2b;
}
.color-panel {
    height: 131px;
}
.color-body {
    display: flex;
    padding: 9px 0 0 5px;
}
.sliders {
    margin-left: 7px;
}
.slider {
    display: flex;
    height: 25px;
}
.slider b {
    width: 16px;
    font-weight: normal;
    line-height: 17px;
}
.bar {
    width: 112px;
    height: 6px;
    margin-top: 3px;
    border: 1px solid #999;
}
.bar svg {
    margin-top: 5px;
}
.bar.r {
    background: linear-gradient(90deg, #008783, #ff8783);
}
.bar.g {
    background: linear-gradient(90deg, #df0083, #dfff83);
}
.bar.b {
    background: linear-gradient(90deg, #df8700, #df87ff);
}
.num {
    width: 38px;
    height: 19px;
    margin: 1px 0 0 6px;
    padding-left: 3px;
    line-height: 18px;
    background: #3a3a3a;
    border: 1px solid #2e2e2e;
    font-size: 11.5px;
}
.spectrum {
    display: flex;
    width: 219px;
    height: 17px;
    margin: 5px 0 0 4px;
    border: 1px solid #2b2b2b;
}
.hues {
    flex: 1;
    background: linear-gradient(rgba(255, 255, 255, 1), rgba(255, 255, 255, 0) 50%, rgba(0, 0, 0, 0) 50%, rgba(0, 0, 0, .85)), linear-gradient(90deg, #f01818, #fff200 17%, #00a14b 33%, #00a2f0 50%, #20107c 67%, #e8008a 83%, #f01818);
}
.bw {
    width: 8px;
    background: linear-gradient(#fff 50%, #000 50%);
}
.adjust-panel {
    height: 133px;
}
.adjust-title {
    height: 24px;
    padding: 3px 0 0 10px;
    color: #fff;
}
.adjust-row {
    display: flex;
    justify-content: center;
    align-items: center;
    gap: 8px;
    height: 27px;
    padding-right: 33px;
}
.adjust-row svg {
    width: 16px;
    height: 16px;
}
.adjust-row svg.w18 {
    width: 18px;
    margin: 0 -1px;
}
.layers-panel {
    flex: 1;
    display: flex;
    flex-direction: column;
    border-bottom: 0;
}
.select {
    display: flex;
    align-items: center;
    justify-content: space-between;
    height: 21px;
    padding: 0 4px 0 8px;
    border: 1px solid #404040;
    border-radius: 3px;
    background: linear-gradient(#616161, #585858);
    color: #b8b8b8;
}
.select svg {
    fill: #b0b0b0;
}
.layer-filter,
.layer-mode,
.layer-lock {
    display: flex;
    align-items: center;
    height: 28px;
    padding-left: 4px;
    border-bottom: 1px solid #3c3c3c;
    color: #b0b0b0;
    flex: none;
}
.layer-filter svg,
.layer-lock svg,
.pct-btn svg {
    fill: #999;
}
.layer-filter {
    height: 27px;
    gap: 12px;
}
.kind {
    width: 71px;
    padding-left: 7px;
    margin-right: 8px;
}
.filter-type {
    width: 12px;
    text-align: center;
    font: bold 15px "Liberation Serif", serif;
    color: #999;
}
.toggle {
    width: 9px;
    height: 17px;
    margin: 0 4px 0 auto;
    border: 1px solid #333;
    background: linear-gradient(#777 45%, #444 45%);
}
.mode {
    width: 111px;
    margin-right: 8px;
}
.layer-mode label {
    width: 57px;
}
.layer-lock {
    height: 29px;
}
.lock-label {
    width: 39px;
    padding-left: 2px;
}
.layer-lock svg {
    margin-right: 9px;
}
.fill-label {
    margin-left: 16px;
    width: 34px;
}
.pct {
    width: 36px;
    height: 20px;
    line-height: 18px;
    padding-left: 3px;
    border: 1px solid #3c3c3c;
    color: #7d7d7d;
    background: #4b4b4b;
}
.pct-btn {
    display: flex;
    align-items: center;
    justify-content: center;
    width: 20px;
    height: 20px;
    border: 1px solid #3c3c3c;
    border-left: 0;
    border-radius: 0 3px 3px 0;
    background: #5b5b5b;
}
.layer-lock .pct-btn svg {
    margin: 0;
}
.layer-list {
    flex: 1;
    background: linear-gradient(90deg, #454545 225px, #3c3c3c 225px, #434343);
}
.layer {
    display: flex;
    width: 225px;
    height: 31px;
    border-bottom: 1px solid #3a3a3a;
    background: #535353;
}
.eye {
    width: 31px;
    display: flex;
    align-items: center;
    justify-content: center;
    border-right: 1px solid #3a3a3a;
}
.layer-row {
    flex: 1;
    display: flex;
    align-items: center;
    padding: 0 17px 1px 3px;
    background: #6c7e95;
}
.thumb {
    width: 32px;
    height: 23px;
    border: 1px solid #000;
    background: #fff;
    color: #f00;
    font-size: 7px;
    letter-spacing: 1.5px;
    line-height: 20px;
    text-align: center;
}
.layer-name {
    flex: 1;
    margin-left: 12px;
    font-style: italic;
    color: #fff;
}
.layers-foot {
    display: flex;
    align-items: center;
    gap: 15px;
    height: 18px;
    padding-left: 37px;
    border-top: 1px solid #666;
    font-size: 11px;
}

.taskbar {
    height: 7px;
    background: linear-gradient(90deg, #2a2629, #1d262c 15%, #1c2023 60%, #352226 90%, #1f2428);
}
.taskbar i {
    width: 160px;
    height: 7px;
    margin-left: 904px;
    background: #4a4f52;
}

/* File menu */
.file-menu {
    position: absolute;
    left: 39px;
    top: 23px;
    width: 301px;
    height: 573px;
    padding: 2px;
    border: 1px solid #a0a0a0;
    background: #f0f0f0;
    color: #000;
    box-shadow: 2px 2px 3px rgba(0, 0, 0, .55);
}
.item {
    display: flex;
    justify-content: space-between;
    height: 21px;
    line-height: 21px;
    padding: 0 16px 0 19px;
}
.item span {
    letter-spacing: .2px;
}
.item kbd {
    font: inherit;
    letter-spacing: .4px;
}
.item.hover {
    background: #0078d7;
    color: #fff;
}
.item.disabled {
    color: #808080;
}
.item.sub::after {
    content: "";
    margin: 4px -9px 0 0;
    height: 0;
    border: solid transparent;
    border-width: 4px 0 4px 4px;
    border-left-color: #000;
}
.file-menu hr {
    height: 2px;
    margin: 3px 1px 4px;
    border: 0;
    border-top: 1px solid #a0a0a0;
    background: #fff;
}
.cursor {
    position: absolute;
    left: 126px;
    top: 64px;
}

.ime {
    position: absolute;
    left: 1052px;
    top: 996px;
    width: 60px;
    height: 25px;
    display: flex;
    align-items: center;
    justify-content: center;
    gap: 4px;
    border-radius: 5px;
    background: #fff;
    color: #333;
    font-size: 12.5px;
    box-shadow: 0 0 3px #222;
}

.watermark {
    position: absolute;
    left: 1444px;
    top: 927px;
    width: 473px;
    height: 114px;
    background: rgba(255, 255, 255, .61);
}
.wm-title {
    font: bold 47px "Noto Sans CJK SC", sans-serif;
    fill: #e60f0f;
    stroke: #e60f0f;
    stroke-width: .5px;
}
.wm-url {
    font: 38px "Liberation Serif", serif;
    fill: #1463dc;
    stroke: #1463dc;
    stroke-width: .7px;
}
.wm-tag {
    font: 600 95px "Open Sans", sans-serif;
    fill: #dedede;
}
```
FILE: rulers.js
```js
// one cell every 50 document pixels, five ticks per cell
function buildRuler(id, from, to, side, offset) {
    const ruler = document.getElementById(id);
    for (let v = from; v <= to; v += 50) {
        const cell = document.createElement('div');
        cell.innerHTML = '<span>' + Math.abs(v) + '</span>' + '<i></i>'.repeat(5);
        ruler.appendChild(cell);
    }
    ruler.firstChild.style[side] = offset + 'px';
}

// the part under the open menu is left out
buildRuler('rulerH', -150, 1750, 'marginLeft', 288.5);
buildRuler('rulerV', 550, 1000, 'marginTop', 474.2);
```
